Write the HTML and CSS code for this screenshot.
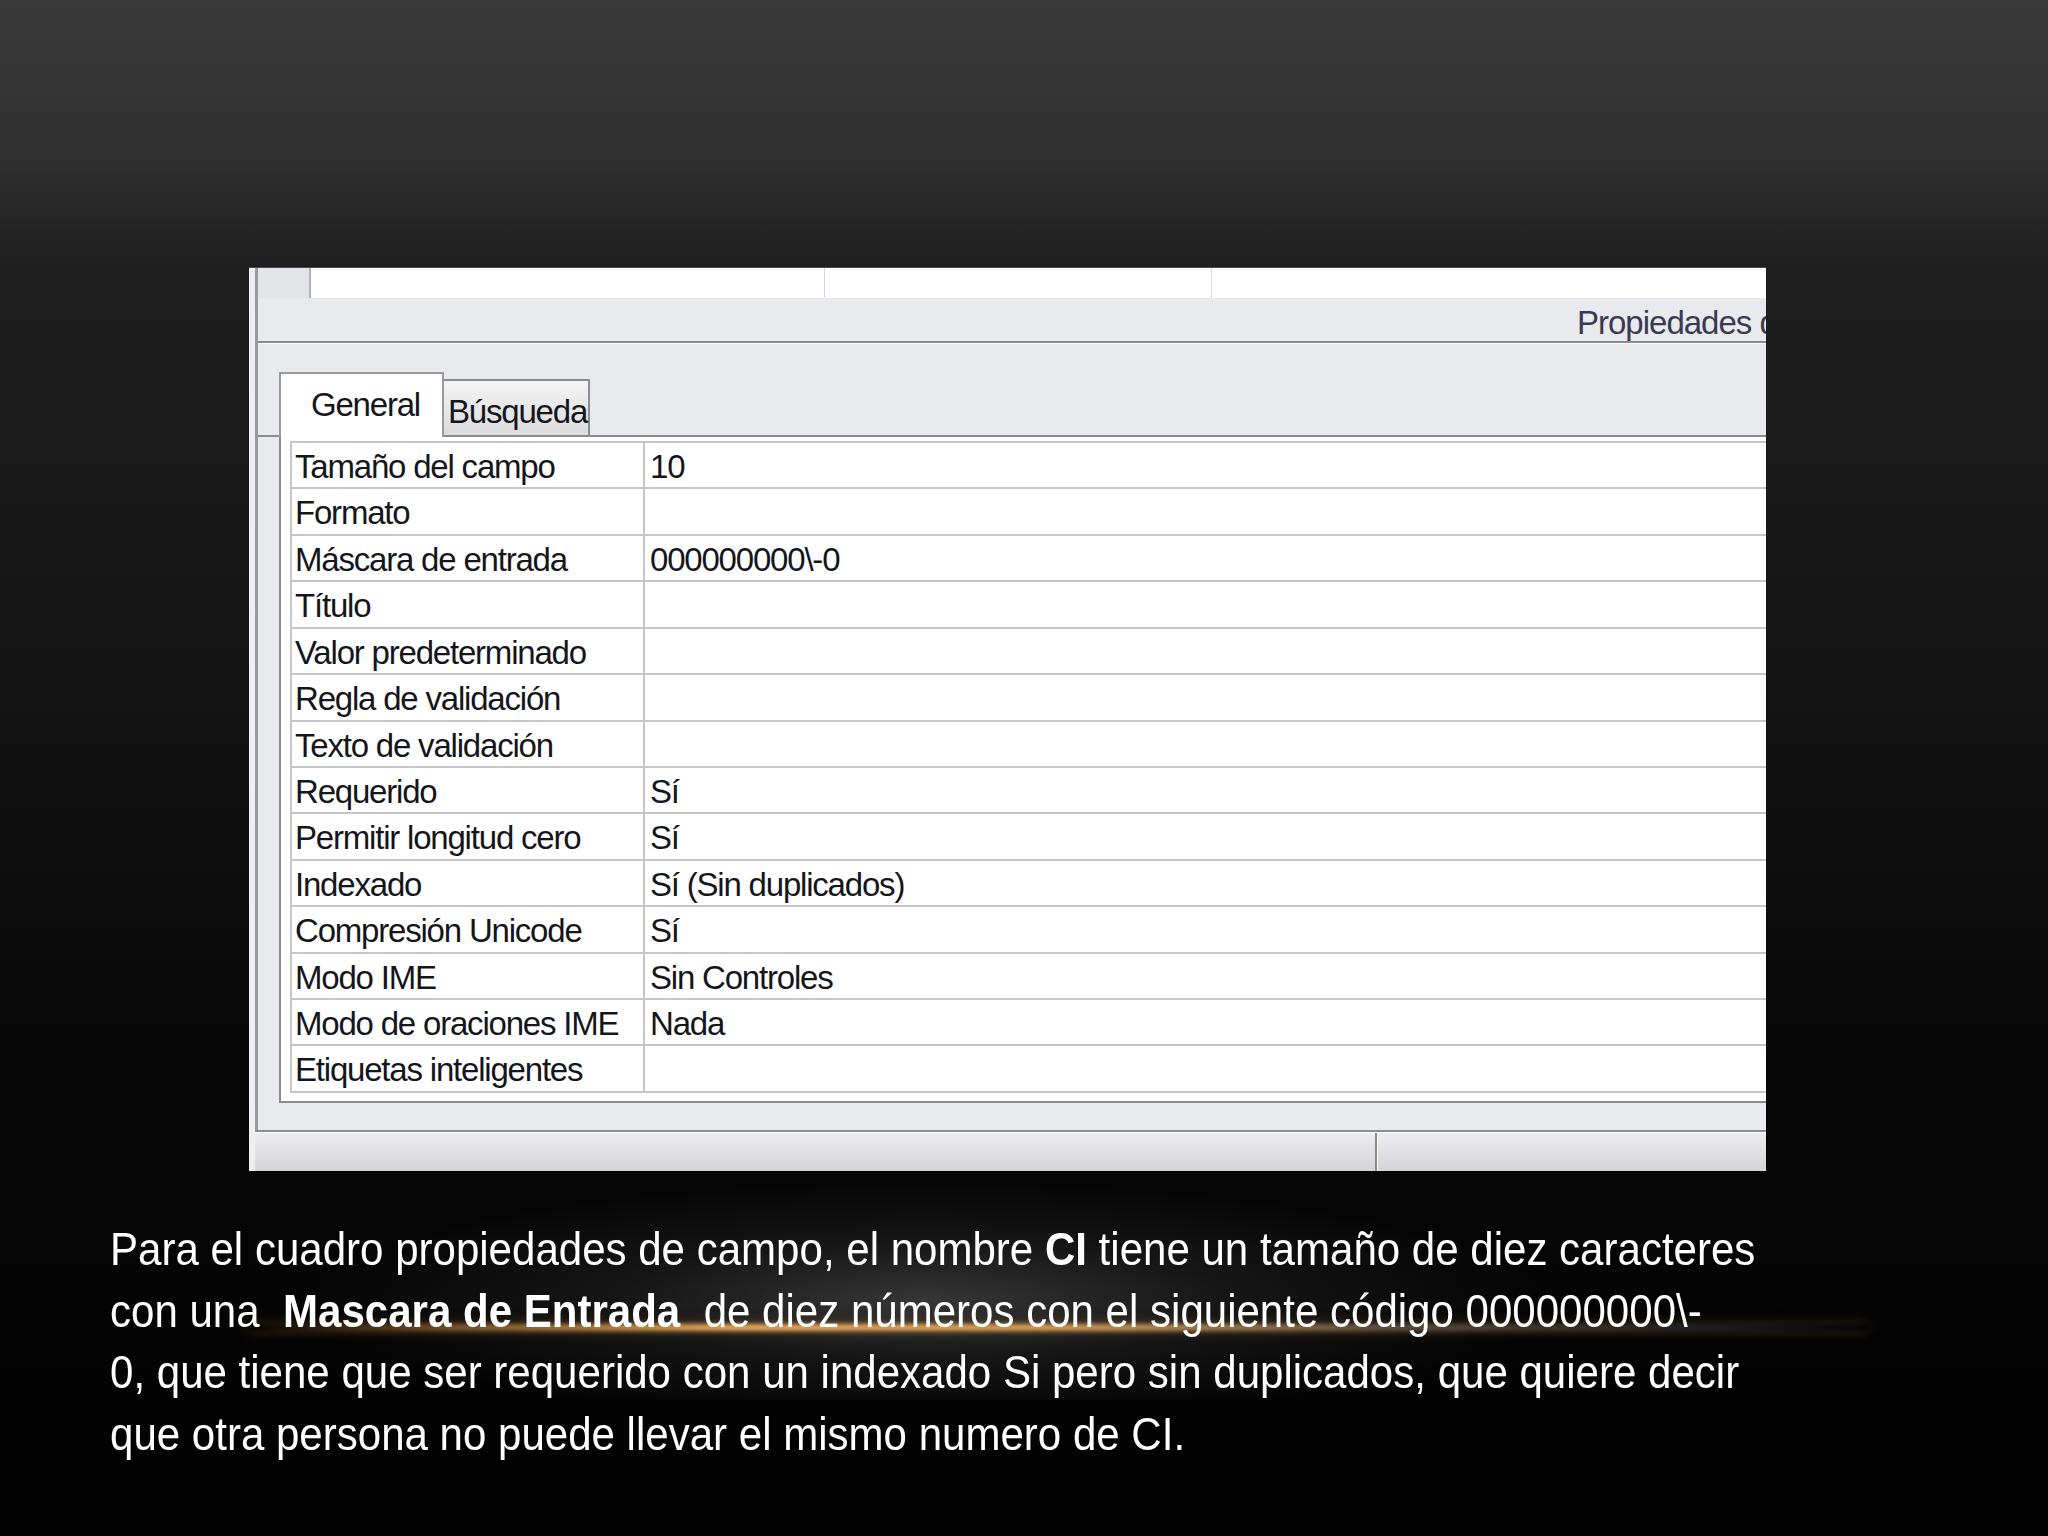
FILE: index.html
```html
<!DOCTYPE html>
<html lang="es">
<head>
<meta charset="utf-8">
<title>Propiedades del campo</title>
<link rel="stylesheet" href="styles.css">
</head>
<body>
<div class="slide">
  <div class="panel">
    <div class="frame">
      <div class="topstrip">
        <div class="ts-sel"></div>
        <div class="ts-c1"></div>
        <div class="ts-c2"></div>
        <div class="ts-c3"></div>
      </div>
      <div class="header"><span class="ptitle">Propiedades del campo</span></div>
      <div class="tabs">
        <div class="tab active">General</div>
        <div class="tab other">Búsqueda</div>
      </div>
      <div class="content">
        <table class="props">
          <tr><td class="lbl">Tamaño del campo</td><td class="val">10</td></tr>
          <tr><td class="lbl">Formato</td><td class="val"></td></tr>
          <tr><td class="lbl">Máscara de entrada</td><td class="val">000000000\-0</td></tr>
          <tr><td class="lbl">Título</td><td class="val"></td></tr>
          <tr><td class="lbl">Valor predeterminado</td><td class="val"></td></tr>
          <tr><td class="lbl">Regla de validación</td><td class="val"></td></tr>
          <tr><td class="lbl">Texto de validación</td><td class="val"></td></tr>
          <tr><td class="lbl">Requerido</td><td class="val">Sí</td></tr>
          <tr><td class="lbl">Permitir longitud cero</td><td class="val">Sí</td></tr>
          <tr><td class="lbl">Indexado</td><td class="val">Sí (Sin duplicados)</td></tr>
          <tr><td class="lbl">Compresión Unicode</td><td class="val">Sí</td></tr>
          <tr><td class="lbl">Modo IME</td><td class="val">Sin Controles</td></tr>
          <tr><td class="lbl">Modo de oraciones IME</td><td class="val">Nada</td></tr>
          <tr><td class="lbl">Etiquetas inteligentes</td><td class="val"></td></tr>
        </table>
      </div>
    </div>
    <div class="status">
      <div class="st-l"></div>
      <div class="st-r"></div>
    </div>
  </div>
  <div class="caption-wrap">
    <p class="caption">Para el cuadro propiedades de campo, el nombre <b>CI</b> tiene un tamaño de diez caracteres con una&nbsp; <b>Mascara de Entrada</b>&nbsp; de diez números con el siguiente código 000000000\-<br>0, que tiene que ser requerido con un indexado Si pero sin duplicados, que quiere decir que otra persona no puede llevar el mismo numero de CI.</p>
  </div>
</div>
</body>
</html>
```
FILE: styles.css
```css
html, body {
  margin: 0;
  padding: 0;
}
body {
  width: 2048px;
  height: 1536px;
  overflow: hidden;
  background: linear-gradient(to bottom, #3a3a3a 0px, #303030 150px, #1f1f1f 267px, #131313 700px, #060606 1100px, #020202 1536px);
}
.slide {
  position: relative;
  width: 2048px;
  height: 1536px;
  padding-top: 267px;
  box-sizing: border-box;
}
.slide::before {
  content: "";
  position: absolute;
  left: 300px;
  top: 1180px;
  width: 1250px;
  height: 220px;
  background: radial-gradient(ellipse at 50% 55%, rgba(95,95,95,0.55) 0%, rgba(60,60,60,0.3) 35%, rgba(30,30,30,0) 70%);
  z-index: 0;
}
.slide::after {
  content: "";
  position: absolute;
  left: 248px;
  top: 1324px;
  width: 1620px;
  height: 7px;
  background: linear-gradient(to right, rgba(120,80,30,0) 0%, rgba(190,130,60,0.6) 12%, rgba(235,170,90,1) 30%, rgba(225,165,90,0.95) 50%, rgba(170,140,110,0.55) 70%, rgba(130,130,130,0.25) 88%, rgba(100,100,100,0) 100%);
  filter: blur(2px);
  box-shadow: 0 0 12px rgba(200,140,60,0.35);
  z-index: 0;
}
.panel {
  position: relative;
  z-index: 1;
  margin-left: 249px;
  width: 1517px;
  height: 904px;
  border-top: 1px solid #4a4a4a;
  background: #eeeff1;
  padding-left: 6px;
  box-sizing: border-box;
  overflow: hidden;
  display: flex;
  flex-direction: column;
  font-family: "Liberation Sans", Arial, sans-serif;
  font-size: 33px;
  letter-spacing: -1.2px;
  color: #15151c;
}
.frame {
  border-left: 3px solid #9a9a9e;
  border-bottom: 2px solid #8c8c90;
  background: #e9eaee;
  height: 864px;
  box-sizing: border-box;
  display: flex;
  flex-direction: column;
  overflow: hidden;
}
.topstrip {
  height: 30px;
  display: flex;
  background: #ffffff;
  flex: none;
}
.ts-sel {
  width: 51px;
  background: #e3e4e8;
  border-right: 2px solid #b0b2b8;
}
.ts-c1 {
  width: 513px;
  border-right: 1px solid #d6d9e0;
}
.ts-c2 {
  width: 386px;
  border-right: 1px solid #d6d9e0;
}
.ts-c3 {
  flex: 1;
}
.header {
  height: 45px;
  box-sizing: border-box;
  flex: none;
  border-bottom: 2px solid #8c8c90;
  padding-left: 1319px;
  padding-top: 5px;
  line-height: 40px;
  white-space: nowrap;
  overflow: hidden;
  color: #3a3a52;
  box-shadow: 0 1px 0 #fafafa;
}
.header .ptitle {
  letter-spacing: -1px;
}
.tabs {
  flex: none;
  height: 94px;
  box-sizing: border-box;
  padding-left: 21px;
  border-bottom: 2px solid #8c8c90;
  display: flex;
  align-items: flex-end;
}
.tab {
  box-sizing: border-box;
  white-space: nowrap;
}
.tab.active {
  width: 165px;
  height: 65px;
  margin-bottom: -2px;
  background: #ffffff;
  border: 2px solid #9a9a9e;
  border-bottom: none;
  padding-left: 30px;
  padding-top: 10px;
  line-height: 41px;
  position: relative;
}
.tab.other {
  width: 146px;
  height: 56px;
  background: linear-gradient(to bottom, #f4f4f4, #dcdcdc);
  border: 2px solid #8c8c90;
  border-left: none;
  border-bottom: none;
  padding-left: 4px;
  padding-top: 10px;
  line-height: 41px;
}
.content {
  flex: none;
  margin-left: 21px;
  width: 1600px;
  background: #ffffff;
  border-left: 2px solid #8c8c90;
  border-bottom: 2px solid #8c8c90;
  padding: 4px 0 8px 9px;
}
.props {
  border-collapse: collapse;
  width: 1600px;
  table-layout: fixed;
}
.props tr {
  height: 46.43px;
}
.props td {
  border: 2px solid #c6c6ca;
  padding: 4px 0 0 0;
  line-height: 39px;
  white-space: nowrap;
  vertical-align: top;
}
.props td.lbl {
  width: 353px;
  padding-left: 3px;
  box-sizing: border-box;
}
.props td.val {
  padding-left: 5px;
}
.status {
  flex: 1;
  display: flex;
  border-top: 1px solid #ffffff;
  background: linear-gradient(to bottom, #eeeef0, #d4d4d8);
}
.st-l {
  width: 1120px;
  border-right: 2px solid #8a8a8e;
}
.st-r {
  flex: 1;
  border-left: 1px solid #ffffff;
}
.caption-wrap {
  position: relative;
  z-index: 1;
  margin: 48px 0 0 110px;
  width: 1665px;
  height: 250px;
}
.caption {
  margin: 0;
  width: 1821px;
  transform: scaleX(0.914);
  transform-origin: 0 0;
  font-family: "Liberation Sans", Arial, sans-serif;
  font-size: 46px;
  line-height: 61.5px;
  color: #ffffff;
}
.caption b {
  font-weight: bold;
}
```
